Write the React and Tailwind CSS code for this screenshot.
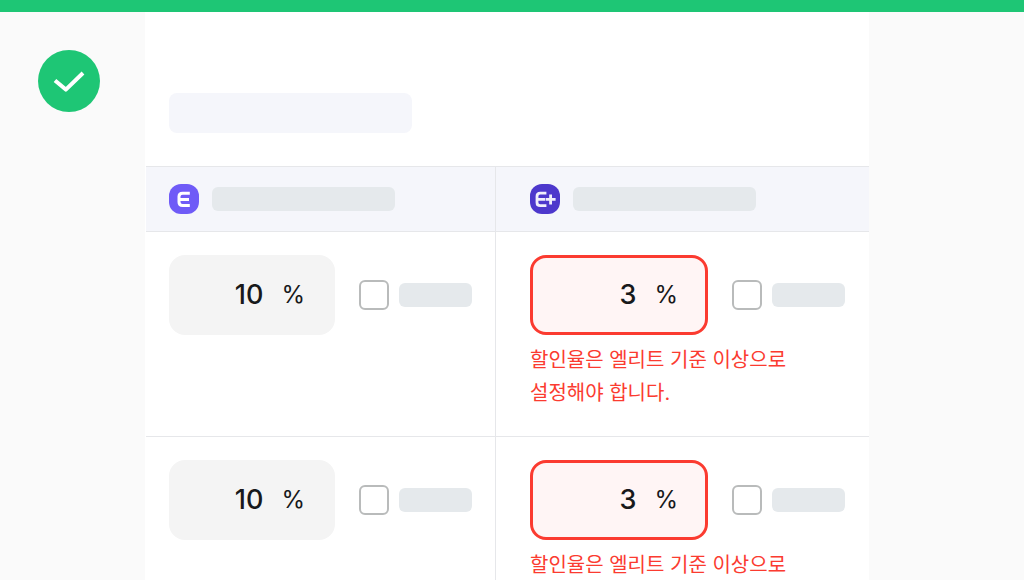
import React, { useState } from 'react';

const ROWS = [
  { id: 1, elite: '10', elitePlus: '3' },
  { id: 2, elite: '10', elitePlus: '3' },
];

const ERROR_MESSAGE = '할인율은 엘리트 기준 이상으로 설정해야 합니다.';

function EliteIcon() {
  return (
    <svg width="30" height="30" viewBox="0 0 30 30" fill="none" className="shrink-0" aria-hidden="true">
      <rect width="30" height="30" rx="12" fill="#6f5bf7" />
      <path
        d="M20.8 9.2h-7.2q-3.6 0-3.6 3.4v5.4q0 3.6 3.6 3.6h7.2M10 15.4h10"
        stroke="#fff"
        strokeWidth="3"
      />
    </svg>
  );
}

function ElitePlusIcon() {
  return (
    <svg width="30" height="30" viewBox="0 0 30 30" fill="none" className="shrink-0" aria-hidden="true">
      <rect width="30" height="30" rx="12" fill="#4d38cc" />
      <path
        d="M16.4 9.2h-6.2q-3.2 0-3.2 3.2v6q0 3.2 3.2 3.2h6.2M7 15.4h8"
        stroke="#f1effb"
        strokeWidth="2.8"
      />
      <path d="M20.6 10.4v10M15.6 15.4h10" stroke="#f1effb" strokeWidth="2.8" />
    </svg>
  );
}

function RateField({ id, value, onChange, error }) {
  return (
    <div>
      <div className="flex items-center">
        <label
          htmlFor={`rate-${id}`}
          className={
            error
              ? 'flex h-20 min-w-0 flex-1 items-center justify-end gap-[18px] rounded-2xl border-[3px] border-[#fb3b30] bg-[#fff5f5] pr-[27px]'
              : 'flex h-20 min-w-0 flex-1 items-center justify-end gap-[18px] rounded-2xl border-[3px] border-[#f4f4f4] bg-[#f4f4f4] pr-[27px]'
          }
        >
          <input
            id={`rate-${id}`}
            type="text"
            inputMode="numeric"
            value={value}
            onChange={(e) => onChange(e.target.value)}
            className="w-full min-w-0 bg-transparent text-right text-[27px] leading-9 font-medium text-[#18191b] outline-none"
          />
          <span className="text-2xl text-[#18191b]">%</span>
        </label>
        <label className="ml-6 flex items-center gap-[10px]">
          <input
            type="checkbox"
            aria-label="선택"
            className="size-[30px] shrink-0 appearance-none rounded-md border-2 border-[#b9bbbb] bg-white checked:bg-[#1ec675]"
          />
          <span className="h-6 w-[73px] rounded-md bg-[#e5e9ec]" />
        </label>
      </div>
      {error && (
        <p className="mt-[9px] max-w-[280px] text-xl leading-[33px] break-keep text-[#fb3b30]">{error}</p>
      )}
    </div>
  );
}

function App() {
  const [rows, setRows] = useState(ROWS);

  const updateRow = (id, key, value) => {
    setRows(rows.map((row) => (row.id === id ? { ...row, [key]: value } : row)));
  };

  return (
    <div className="flex h-screen flex-col overflow-hidden bg-[#fafafa] font-['Inter','Noto_Sans_CJK_KR',sans-serif]">
      <div className="h-3 shrink-0 bg-[#1ec675]" />

      <div className="flex min-h-0 flex-1">
        {/* Status */}
        <aside className="w-[145px] shrink-0 pt-[38px] pl-[38px]">
          <div className="flex size-[62px] items-center justify-center rounded-full bg-[#1ec675]">
            <svg width="34" height="24" viewBox="0 0 34 24" fill="none" aria-hidden="true">
              <path d="M3 11.4l10.8 9.2L31 4" stroke="#fff" strokeWidth="4" strokeLinejoin="round" />
            </svg>
          </div>
        </aside>

        {/* Discount settings */}
        <main className="mr-[155px] min-w-0 flex-1 border-l border-white bg-white">
          <div className="px-[23px] pt-[81px] pb-[33px]">
            <div className="h-10 w-[243px] rounded-lg bg-[#f5f6fb]" />
          </div>

          <table className="w-full table-fixed border-separate border-spacing-0">
            <colgroup>
              <col className="w-[350px]" />
              <col />
            </colgroup>
            <thead className="bg-[#f5f6fb]">
              <tr>
                <th className="border-y border-r border-[#e6e7ea] px-[23px]">
                  <div className="flex h-16 items-center gap-[13px]">
                    <EliteIcon />
                    <span className="h-6 w-[183px] rounded-md bg-[#e5e9ec]" />
                  </div>
                </th>
                <th className="border-y border-[#e6e7ea] pr-6 pl-[34px]">
                  <div className="flex h-16 items-center gap-[13px]">
                    <ElitePlusIcon />
                    <span className="h-6 w-[183px] rounded-md bg-[#e5e9ec]" />
                  </div>
                </th>
              </tr>
            </thead>
            <tbody>
              {rows.map((row) => (
                <tr key={row.id}>
                  <td className="border-r border-b border-[#e6e7ea] px-[23px] pt-[23px] pb-[26px] align-top">
                    <RateField
                      id={`elite-${row.id}`}
                      value={row.elite}
                      onChange={(value) => updateRow(row.id, 'elite', value)}
                    />
                  </td>
                  <td className="border-b border-[#e6e7ea] pt-[23px] pr-6 pb-[26px] pl-[34px] align-top">
                    <RateField
                      id={`elite-plus-${row.id}`}
                      value={row.elitePlus}
                      onChange={(value) => updateRow(row.id, 'elitePlus', value)}
                      error={Number(row.elitePlus) < Number(row.elite) ? ERROR_MESSAGE : ''}
                    />
                  </td>
                </tr>
              ))}
            </tbody>
          </table>
        </main>
      </div>
    </div>
  );
}

export default App;
